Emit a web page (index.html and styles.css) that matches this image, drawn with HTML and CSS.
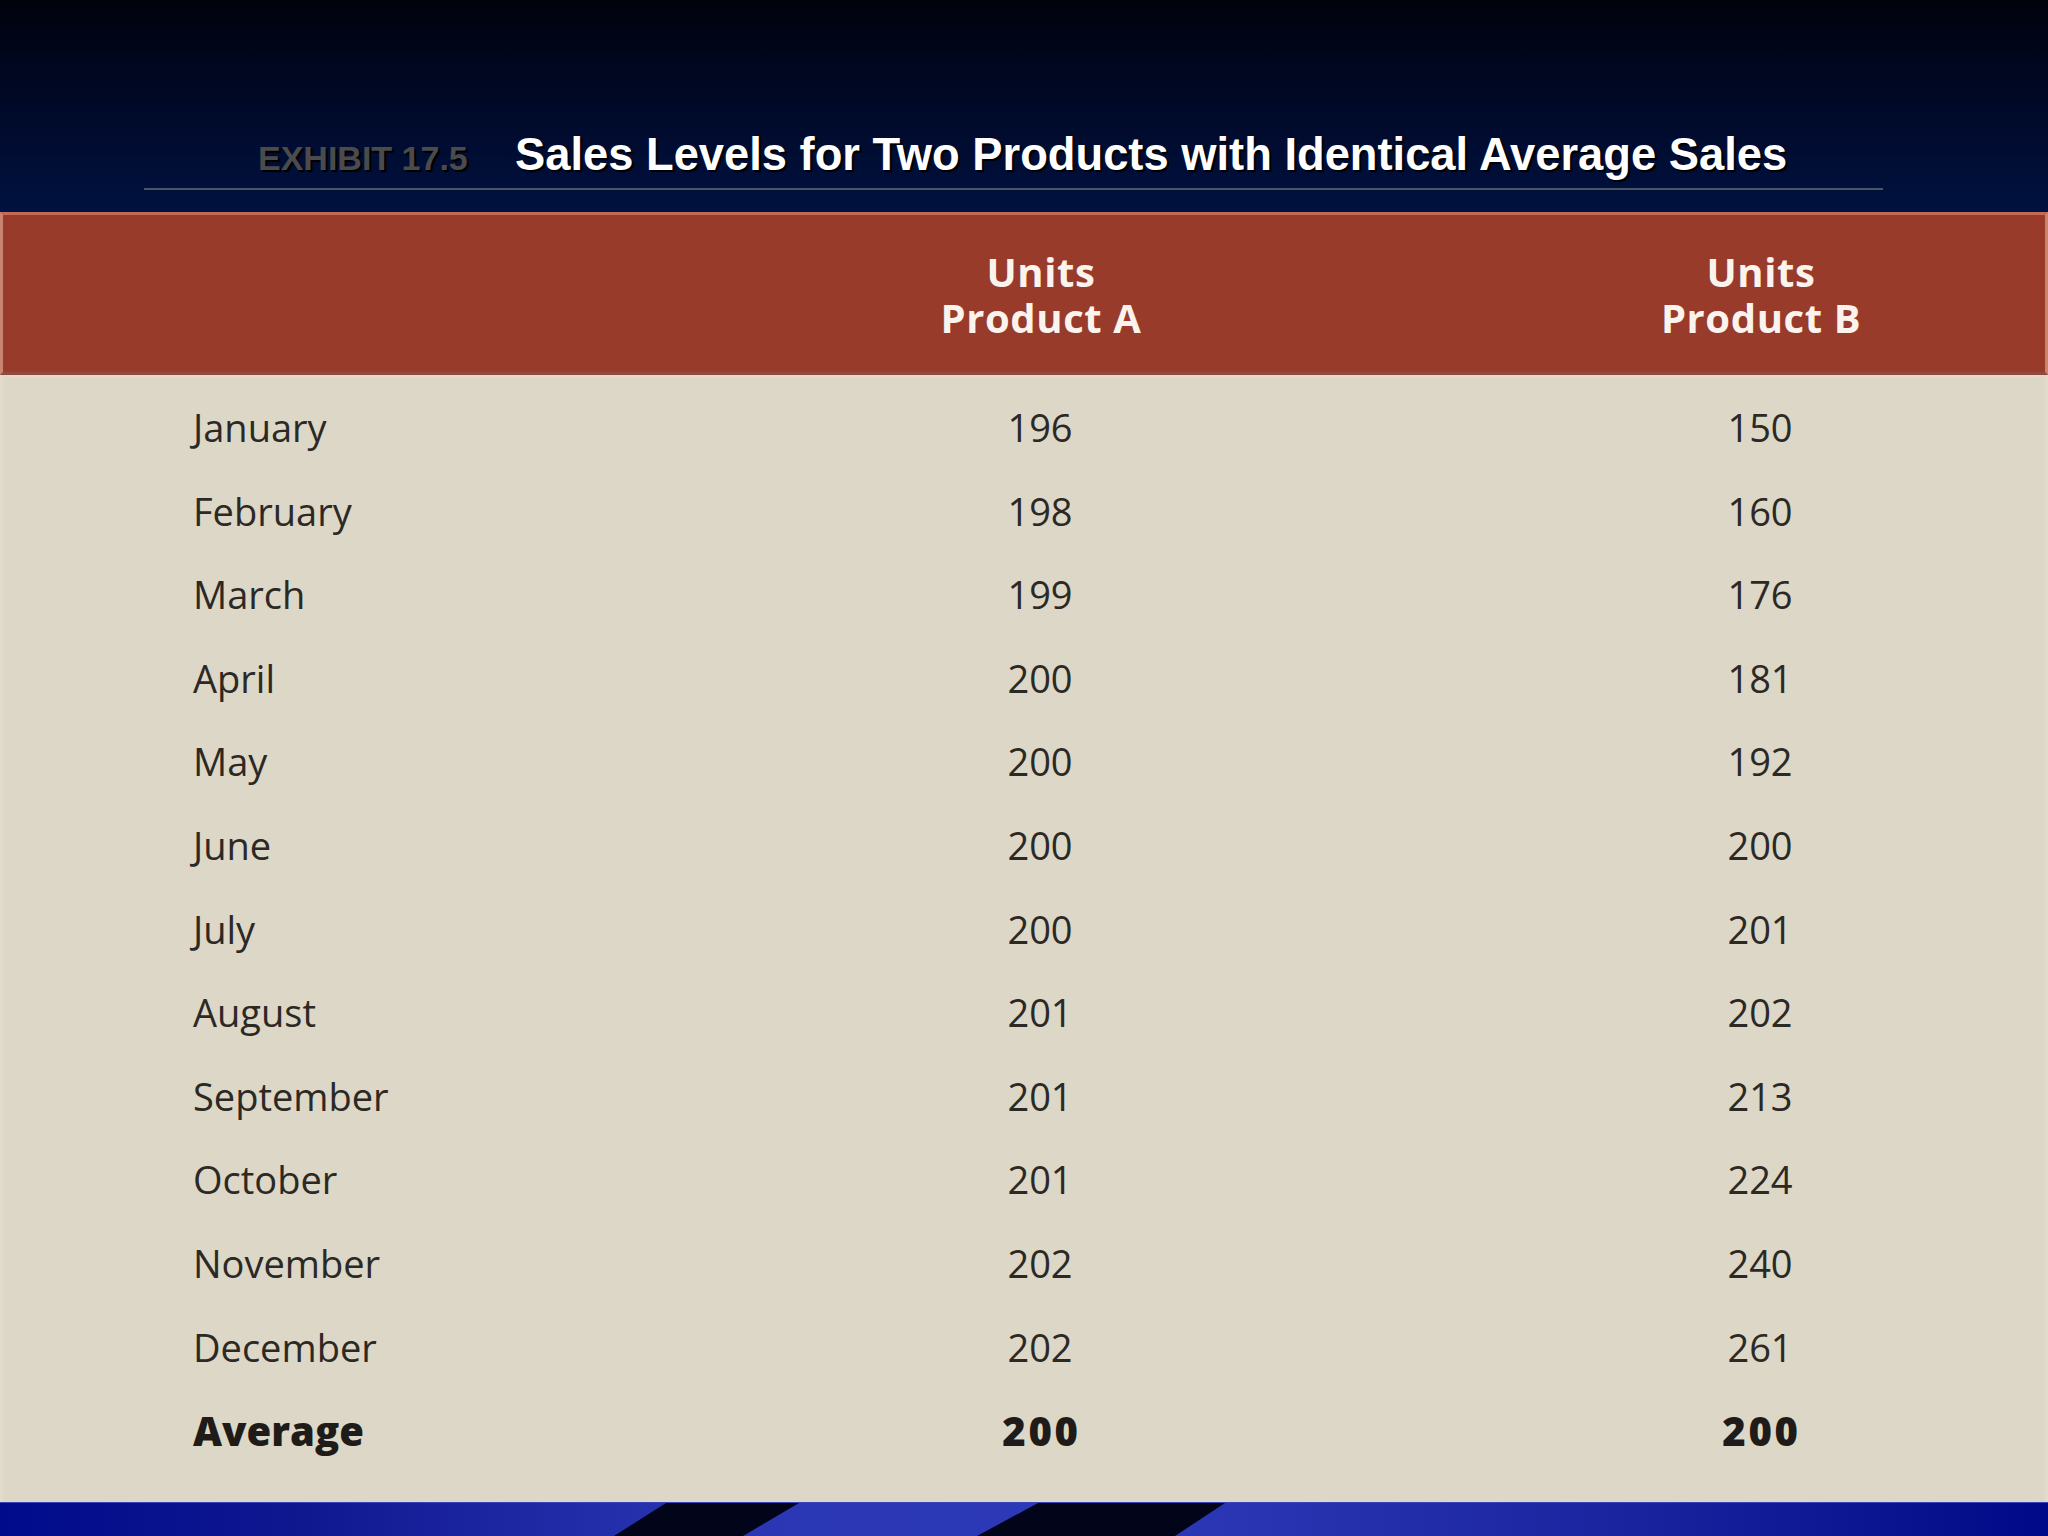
FILE: index.html
```html
<!DOCTYPE html>
<html>
<head>
<meta charset="utf-8">
<link rel="stylesheet" href="styles.css">
</head>
<body>
<div class="slide">
  <div class="title-area">
    <div class="title-row">
      <span class="exhibit">EXHIBIT 17.5</span>
      <span class="title">Sales Levels for Two Products with Identical Average Sales</span>
    </div>
    <div class="rule"></div>
  </div>
  <div class="table">
    <div class="thead">
      <div class="cell"></div>
      <div class="cell hcell"><div class="hline">Units</div><div class="hline">Product A</div></div>
      <div class="cell hcell"><div class="hline">Units</div><div class="hline">Product B</div></div>
    </div>
    <div class="tbody">
      <div class="row"><div class="month">January</div><div class="num">196</div><div class="num">150</div></div>
      <div class="row"><div class="month">February</div><div class="num">198</div><div class="num">160</div></div>
      <div class="row"><div class="month">March</div><div class="num">199</div><div class="num">176</div></div>
      <div class="row"><div class="month">April</div><div class="num">200</div><div class="num">181</div></div>
      <div class="row"><div class="month">May</div><div class="num">200</div><div class="num">192</div></div>
      <div class="row"><div class="month">June</div><div class="num">200</div><div class="num">200</div></div>
      <div class="row"><div class="month">July</div><div class="num">200</div><div class="num">201</div></div>
      <div class="row"><div class="month">August</div><div class="num">201</div><div class="num">202</div></div>
      <div class="row"><div class="month">September</div><div class="num">201</div><div class="num">213</div></div>
      <div class="row"><div class="month">October</div><div class="num">201</div><div class="num">224</div></div>
      <div class="row"><div class="month">November</div><div class="num">202</div><div class="num">240</div></div>
      <div class="row"><div class="month">December</div><div class="num">202</div><div class="num">261</div></div>
      <div class="row total"><div class="month">Average</div><div class="num">200</div><div class="num">200</div></div>
    </div>
  </div>
  <div class="strip">
    <svg class="strip-svg" width="2048" height="34" viewBox="0 0 2048 34">
      <polygon points="666,0 799,0 743,33 614,33" fill="#02051a"/>
      <polygon points="1038,0 1225,0 1175,33 977,33" fill="#02051a"/>
    </svg>
  </div>
</div>
</body>
</html>
```

FILE: styles.css
```css
html, body {
  margin: 0;
  padding: 0;
}
body {
  width: 2048px;
  height: 1536px;
  overflow: hidden;
  background: #00123f;
}
.slide {
  width: 2048px;
  height: 1536px;
  display: flex;
  flex-direction: column;
}
.title-area {
  height: 212px;
  box-sizing: border-box;
  background: linear-gradient(to bottom, #00030c 0%, #000826 45%, #001240 100%);
  padding-top: 129px;
}
.title-row {
  display: flex;
  align-items: baseline;
  padding-left: 258px;
  height: 52px;
  font-family: "Liberation Sans", Arial, sans-serif;
  font-weight: bold;
}
.exhibit {
  font-size: 34px;
  color: #4b4b4d;
  text-shadow: 2px 2px 1px #000000;
  width: 257px;
  flex: none;
}
.title {
  font-size: 45.3px;
  color: #ffffff;
  text-shadow: 2px 2px 1px #000000;
  white-space: nowrap;
}
.rule {
  margin: 7px 0 0 144px;
  width: 1739px;
  height: 2px;
  background: #4a5666;
}
.table {
  flex: 1;
  display: flex;
  flex-direction: column;
  font-family: "Open Sans", "Noto Sans", sans-serif;
}
.thead {
  height: 163px;
  box-sizing: border-box;
  background: #983b2b;
  border-top: 3px solid #c26a56;
  border-bottom: 3px solid #8d4a3d;
  border-left: 3px solid #c98370;
  border-right: 3px solid #c98370;
  display: grid;
  grid-template-columns: 407px 560px 560px;
  column-gap: 160px;
  padding-left: 191px;
  padding-top: 34px;
}
.hcell {
  color: #fbf4ee;
  font-weight: 700;
  font-size: 40px;
  text-align: center;
  letter-spacing: 0.6px;
}
.hline {
  height: 46px;
  line-height: 46px;
}
.tbody {
  flex: 1;
  background: #dcd7c6;
  border-top: 2px solid #e8d6c6;
  border-left: 3px solid #e4dccb;
  border-right: 3px solid #e4dccb;
  padding-top: 9px;
}
.row {
  display: grid;
  grid-template-columns: 407px 560px 560px;
  column-gap: 160px;
  padding-left: 190px;
  height: 83.6px;
  line-height: 83.6px;
  font-size: 38px;
  color: #2c2925;
}
.num {
  text-align: center;
}
.total {
  font-weight: 800;
  font-size: 40px;
  color: #1e1b18;
}
.total .num {
  letter-spacing: 2.8px;
  padding-left: 3px;
}
.strip {
  height: 34px;
  flex: none;
  background: linear-gradient(to right, #000b8c 0%, #101890 15%, #2a36b4 35%, #2d3ab8 55%, #1a239e 80%, #000a88 100%);
  border-top: 1px solid #3a44b8;
  box-sizing: border-box;
}
.strip-svg {
  display: block;
}
```
